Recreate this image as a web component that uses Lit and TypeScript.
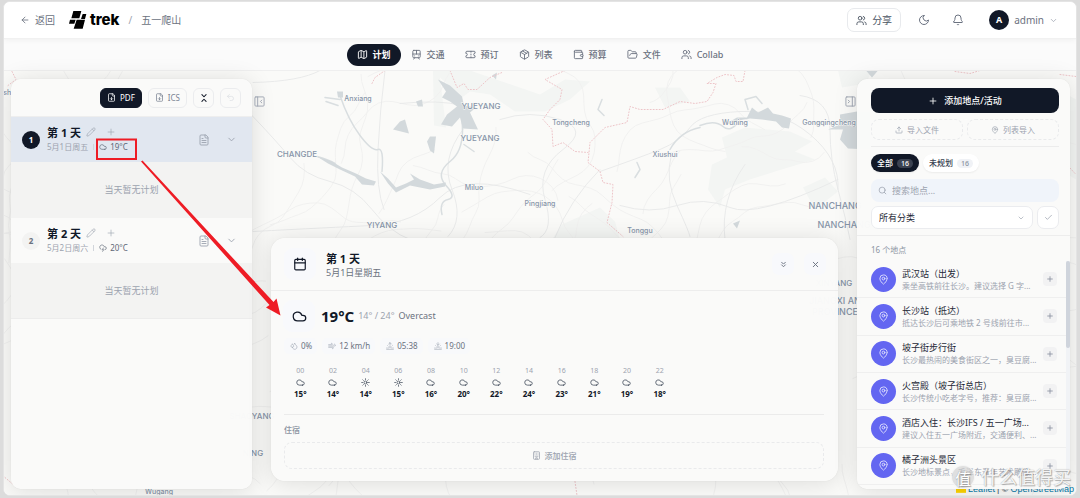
import { LitElement, html, css, svg } from "lit";
import { customElement } from "lit/decorators.js";
import { classMap } from "lit/directives/class-map.js";

const ICONS: Record<string, unknown> = {
  back: svg`<path d="m12 19-7-7 7-7"/><path d="M19 12H5"/>`,
  map: svg`<path d="M14.106 5.553a2 2 0 0 0 1.788 0l3.659-1.83A1 1 0 0 1 21 4.619v12.764a1 1 0 0 1-.553.894l-4.553 2.277a2 2 0 0 1-1.788 0l-4.212-2.106a2 2 0 0 0-1.788 0l-3.659 1.83A1 1 0 0 1 3 19.381V6.618a1 1 0 0 1 .553-.894l4.553-2.277a2 2 0 0 1 1.788 0z"/><path d="M15 5.764v15"/><path d="M9 3.236v15"/>`,
  train: svg`<rect width="16" height="16" x="4" y="3" rx="2"/><path d="M4 11h16"/><path d="M12 3v8"/><path d="m8 19-2 3"/><path d="m18 22-2-3"/><path d="M8 15h.01"/><path d="M16 15h.01"/>`,
  ticket: svg`<path d="M2 9a3 3 0 0 1 0 6v2a2 2 0 0 0 2 2h16a2 2 0 0 0 2-2v-2a3 3 0 0 1 0-6V7a2 2 0 0 0-2-2H4a2 2 0 0 0-2 2Z"/><path d="M13 5v2"/><path d="M13 17v2"/><path d="M13 11v2"/>`,
  box: svg`<path d="M11 21.73a2 2 0 0 0 2 0l7-4A2 2 0 0 0 21 16V8a2 2 0 0 0-1-1.73l-7-4a2 2 0 0 0-2 0l-7 4A2 2 0 0 0 3 8v8a2 2 0 0 0 1 1.73z"/><path d="M12 22V12"/><path d="m3.3 7 8.7 5 8.7-5"/><path d="m7.5 4.27 9 5.15"/>`,
  wallet: svg`<path d="M19 7V4a1 1 0 0 0-1-1H5a2 2 0 0 0 0 4h15a1 1 0 0 1 1 1v4h-3a2 2 0 0 0 0 4h3a1 1 0 0 0 1-1v-2a1 1 0 0 0-1-1"/><path d="M3 5v14a2 2 0 0 0 2 2h15a1 1 0 0 0 1-1v-4"/>`,
  folder: svg`<path d="m6 14 1.5-2.9A2 2 0 0 1 9.24 10H20a2 2 0 0 1 1.94 2.5l-1.54 6a2 2 0 0 1-1.95 1.5H4a2 2 0 0 1-2-2V5a2 2 0 0 1 2-2h3.9a2 2 0 0 1 1.69.9l.81 1.2a2 2 0 0 0 1.67.9H18a2 2 0 0 1 2 2v2"/>`,
  users: svg`<path d="M16 21v-2a4 4 0 0 0-4-4H6a4 4 0 0 0-4 4v2"/><circle cx="9" cy="7" r="4"/><path d="M22 21v-2a4 4 0 0 0-3-3.87"/><path d="M16 3.13a4 4 0 0 1 0 7.75"/>`,
  moon: svg`<path d="M12 3a6 6 0 0 0 9 9 9 9 0 1 1-9-9Z"/>`,
  bell: svg`<path d="M10.268 21a2 2 0 0 0 3.464 0"/><path d="M3.262 15.326A1 1 0 0 0 4 17h16a1 1 0 0 0 .74-1.673C19.41 13.956 18 12.499 18 8A6 6 0 0 0 6 8c0 4.499-1.411 5.956-2.738 7.326"/>`,
  down: svg`<path d="m6 9 6 6 6-6"/>`,
  filedown: svg`<path d="M15 2H6a2 2 0 0 0-2 2v16a2 2 0 0 0 2 2h12a2 2 0 0 0 2-2V7Z"/><path d="M14 2v4a2 2 0 0 0 2 2h4"/><path d="M12 18v-6"/><path d="m9 15 3 3 3-3"/>`,
  collapse: svg`<path d="m7 20 5-5 5 5"/><path d="m7 4 5 5 5-5"/>`,
  undo: svg`<path d="M9 14 4 9l5-5"/><path d="M4 9h10.500a5.500 5.500 0 0 1 0 11H11"/>`,
  pencil: svg`<path d="M21.174 6.812a1 1 0 0 0-3.986-3.987L3.842 16.174a2 2 0 0 0-.5.83l-1.321 4.352a.5.5 0 0 0 .623.622l4.353-1.32a2 2 0 0 0 .83-.497z"/><path d="m15 5 4 4"/>`,
  plus: svg`<path d="M5 12h14"/><path d="M12 5v14"/>`,
  note: svg`<path d="M15 2H6a2 2 0 0 0-2 2v16a2 2 0 0 0 2 2h12a2 2 0 0 0 2-2V7Z"/><path d="M14 2v4a2 2 0 0 0 2 2h4"/><path d="M10 9H8"/><path d="M16 13H8"/><path d="M16 17H8"/>`,
  cloud: svg`<path d="M17.500 19H9a7 7 0 1 1 6.710-9h1.790a4.500 4.500 0 1 1 0 9Z"/>`,
  storm: svg`<path d="M6 16.326A7 7 0 1 1 15.710 8h1.790a4.500 4.500 0 0 1 .5 8.973"/><path d="m13 12-3 5h4l-3 5"/>`,
  sun: svg`<circle cx="12" cy="12" r="4"/><path d="M12 2v2"/><path d="M12 20v2"/><path d="m4.930 4.930 1.410 1.410"/><path d="m17.660 17.660 1.410 1.410"/><path d="M2 12h2"/><path d="M20 12h2"/><path d="m6.340 17.660-1.410 1.410"/><path d="m19.070 4.930-1.410 1.410"/>`,
  calendar: svg`<path d="M8 2v4"/><path d="M16 2v4"/><rect width="18" height="18" x="3" y="4" rx="2"/><path d="M3 10h18"/>`,
  chevrons: svg`<path d="m7 6 5 5 5-5"/><path d="m7 13 5 5 5-5"/>`,
  close: svg`<path d="M18 6 6 18"/><path d="m6 6 12 12"/>`,
  drops: svg`<path d="M7 16.300c2.200 0 4-1.830 4-4.050 0-1.160-.57-2.260-1.710-3.190S7.290 6.750 7 5.300c-.29 1.450-1.140 2.840-2.290 3.760S3 11.100 3 12.250c0 2.220 1.800 4.050 4 4.050z"/><path d="M12.560 6.600A10.970 10.970 0 0 0 14 3.020c.5 2.500 2 4.900 4 6.500s3 3.500 3 5.500a6.980 6.980 0 0 1-11.910 4.970"/>`,
  wind: svg`<path d="M12.800 19.600A2 2 0 1 0 14 16H2"/><path d="M17.500 8a2.500 2.500 0 1 1 2 4H2"/><path d="M9.800 4.400A2 2 0 1 1 11 8H2"/>`,
  sunrise: svg`<path d="M12 2v8"/><path d="m4.930 10.930 1.410 1.410"/><path d="M2 18h2"/><path d="M20 18h2"/><path d="m19.070 10.930-1.410 1.410"/><path d="M22 22H2"/><path d="m8 6 4-4 4 4"/><path d="M16 18a4 4 0 0 0-8 0"/>`,
  sunset: svg`<path d="M12 10V2"/><path d="m4.930 10.930 1.410 1.410"/><path d="M2 18h2"/><path d="M20 18h2"/><path d="m19.070 10.930-1.410 1.410"/><path d="M22 22H2"/><path d="m16 6-4 4-4-4"/><path d="M16 18a4 4 0 0 0-8 0"/>`,
  hotel: svg`<rect width="16" height="20" x="4" y="2" rx="2"/><path d="M8 6h.01M12 6h.01M16 6h.01M8 10h.01M12 10h.01M16 10h.01M8 14h8"/><path d="M10 22v-4h4v4"/>`,
  upload: svg`<path d="M12 3v12"/><path d="m17 8-5-5-5 5"/><path d="M21 15v4a2 2 0 0 1-2 2H5a2 2 0 0 1-2-2v-4"/>`,
  pin: svg`<path d="M20 10c0 4.993-5.539 10.193-7.399 11.799a1 1 0 0 1-1.202 0C9.539 20.193 4 14.993 4 10a8 8 0 0 1 16 0"/><circle cx="12" cy="10" r="3"/>`,
  search: svg`<circle cx="11" cy="11" r="8"/><path d="m21 21-4.300-4.300"/>`,
  check: svg`<path d="M20 6 9 17l-5-5"/>`,
  panelLeft: svg`<rect width="20" height="20" x="2" y="2" rx="2"/><path d="M8 2v20"/><path d="m17 9-3 3 3 3"/>`,
  panelRight: svg`<rect width="20" height="20" x="2" y="2" rx="2"/><path d="M16 2v20"/><path d="m7 9 3 3-3 3"/>`,
};

const icon = (name: string, size = 10, width = 2) => html`<svg
  class="icon" width=${size} height=${size} viewBox="0 0 24 24" fill="none" stroke="currentColor"
  stroke-width=${width} stroke-linecap="round" stroke-linejoin="round" aria-hidden="true">${ICONS[name]}</svg>`;

const TABS = [
  ["map", "计划"], ["train", "交通"], ["ticket", "预订"], ["box", "列表"],
  ["wallet", "预算"], ["folder", "文件"], ["users", "Collab"],
];

const DAYS = [
  { n: 1, date: "5月1日周五", sky: "cloud", temp: "19°C" },
  { n: 2, date: "5月2日周六", sky: "storm", temp: "20°C" },
];

const HOURS: [string, string, string][] = [
  ["00", "cloud", "15°"], ["02", "cloud", "14°"], ["04", "sun", "14°"], ["06", "sun", "15°"],
  ["08", "cloud", "16°"], ["10", "cloud", "20°"], ["12", "cloud", "22°"], ["14", "cloud", "24°"],
  ["16", "cloud", "23°"], ["18", "cloud", "21°"], ["20", "cloud", "19°"], ["22", "cloud", "18°"],
];

const PLACES = [
  ["武汉站（出发）", "乘坐高铁前往长沙。建议选择 G 字..."],
  ["长沙站（抵达）", "抵达长沙后可乘地铁 2 号线前往市..."],
  ["坡子街步行街", "长沙最热闹的美食街区之一，臭豆腐..."],
  ["火宫殿（坡子街总店）", "长沙传统小吃老字号，推荐：臭豆腐..."],
  ["酒店入住：长沙IFS / 五一广场...", "建议入住五一广场附近，交通便利、..."],
  ["橘子洲头景区", "长沙地标景点，毛泽东青年艺术雕像..."],
];

const CITIES: [number, number, string, number][] = [
  [358, 101, "Anxiang", 7], [481, 109, "YUEYANG", 8], [480, 141, "YUEYANG", 8],
  [571, 125, "Tongcheng", 7], [297, 157, "CHANGDE", 8], [665, 157, "Xiushui", 7],
  [735, 125, "Wuning", 7], [829, 125, "Gongqingcheng", 7], [474, 190, "Miluo", 7],
  [540, 206, "Pingjiang", 7], [382, 228, "YIYANG", 8], [640, 233, "Tonggu", 7],
  [835, 209, "NANCHANG", 9], [844, 228, "NANCHANG", 9], [1, 95, "Jingshi", 7],
  [253, 456, "NING", 8], [252, 419, "SHAOYANG", 8], [834, 286, "XINYANG", 8],
  [835, 304, "JIANGXI AN", 9], [835, 315, "PROVINCE", 9], [159, 494, "Wugang", 7],
];

/* Secondary roads: a fixed pseudo-random walk, so that the mesh is the same on every load. */
function roadMesh(count: number): string {
  let seed = 41;
  const rnd = () => (seed = (seed * 16807) % 2147483647) / 2147483647;
  let d = "";
  for (let i = 0; i < count; i++) {
    let x = rnd() * 1080, y = 65 + rnd() * 430, a = rnd() * 6.28;
    d += `M${x.toFixed(0)} ${y.toFixed(0)}`;
    const steps = 5 + Math.floor(rnd() * 9);
    for (let s = 0; s < steps; s++) {
      const mx = x + Math.cos(a) * 7, my = y + Math.sin(a) * 7;
      a += (rnd() - 0.5) * 1.3;
      x = mx + Math.cos(a) * 8;
      y = my + Math.sin(a) * 8;
      d += `Q${mx.toFixed(1)} ${my.toFixed(1)} ${x.toFixed(1)} ${y.toFixed(1)}`;
    }
  }
  return d;
}

@customElement("trek-map")
export class TrekMap extends LitElement {
  static styles = css`
    :host { display: block; overflow: hidden; background: #fafaf8; }
    .canvas { display: block; width: 100%; height: 100%; }
    .label { font-family: Inter, "Noto Sans", sans-serif; font-weight: 500; fill: #8795a8;
      stroke: #fafaf8; stroke-width: 1px; paint-order: stroke; text-anchor: middle; }
    .land { fill: #f3f5f3; }
    .water { fill: #d3d9dc; }
    .line { fill: none; stroke-linejoin: round; stroke-linecap: round; }
    .road { stroke: #f1f1f0; stroke-width: 1; }
    .main { stroke: #e9eaea; stroke-width: 1; }
    .river { stroke: #d9dee0; stroke-width: 1.500; }
    .border { stroke: #edc4c8; stroke-width: 1; stroke-dasharray: 1 2; }
  `;
  render() {
    return html`<svg class="canvas" viewBox="4 71 1072 425" preserveAspectRatio="xMidYMid slice" role="img" aria-label="地图">
      <path class="land" d="M433 71L470 71 540 95 565 80 590 82 570 100 545 112 515 112 490 95 470 92 462 98 440 78 446 128 434 126ZM722 138L745 128 790 132 812 142 795 152 815 160 775 172 750 180 725 190 720 208 708 190 712 165 727 158ZM655 88L680 88 690 102 665 108ZM562 225L600 208 615 222 620 240 552 240ZM838 71L872 71 866 84 842 88ZM803 188L825 178 838 192 815 210ZM1040 80L1076 100 1076 180 1060 170Z"/>
      <path class="line road" d=${roadMesh(105)}/>
      <path class="line main" d="M252 116Q275 140 290 158T330 182T372 210T410 240M385 71Q380 110 378 150T384 210M463 130Q440 160 452 190T448 237M500 120Q530 110 560 120T563 150T545 200T540 238M600 172Q640 158 660 150T690 128T740 112T810 135T838 190M671 157Q665 180 677 206T690 237M600 170Q570 200 555 238M620 206Q650 215 677 206T730 208T838 180M253 232Q330 228 372 226T440 198T530 195M800 96Q830 100 830 130T838 190T850 240M725 240Q720 200 745 165M253 83Q300 82 320 71M400 104Q440 100 462 106"/>
      <path class="line river" d="M340 96Q348 120 360 136T378 150T382 172M462 122Q465 150 450 162T446 186T448 200T442 215M700 126Q715 120 723 127T740 120M317 157Q328 160 335 164M670 150Q680 132 700 128M748 110L745 100 756 97 762 104M340 100L325 98M338 106L326 102M637 163L640 170 635 178M602 100L598 110 604 116M464 145L474 152"/>
      <path class="water" d="M438 80L450 86 462 97 464 106 476 108 470 113 478 130 463 129 460 118 452 127 441 125 447 115 457 107 450 102 442 98 446 92ZM393 130L400 122 405 120 409 134ZM430 137L436 137 434 154 430 151 427 142ZM317 157L332 162 342 168 356 174 366 179 376 182 374 186 362 185 355 177 340 170 328 164ZM380 172L388 179 396 188 406 184 414 180 410 174 420 180 434 185 446 183 445 187 430 190 410 186 396 193 388 184ZM416 102L422 100 423 107 418 107ZM337 92L343 92 343 98 338 98ZM723 126L737 118 747 118 752 108 758 113 768 108 773 114 782 116 791 119 789 129 782 128 776 122 762 120 750 119 738 121ZM840 115L857 112 870 112 870 150 848 149 840 140 843 130 828 130 840 125ZM866 71L878 71 872 78ZM733 224L740 221 737 229ZM492 76L497 73 496 80Z"/>
      <path class="line border" d="M745 71L743 82 736 82 734 76 725 75 717 78 707 84 716 84 713 93 707 102 695 104 680 102 663 110 640 110 630 107 627 123 605 128 590 143 588 163 600 172 603 183 613 185 612 203 607 223 623 237M565 71L545 80 562 90 560 100 550 110 543 120 552 130 553 147 563 143 575 152 588 153M450 71L457 88 464 84 468 90 477 90 490 78 502 73M385 71L375 78 372 84M955 72L970 74 980 71M1060 75L1076 77M1062 160L1076 175M5 478L12 484 22 486M12 72L16 80 8 86M575 482L577 496"/>
      ${CITIES.map(([x, y, name, size]) => svg`<text class="label" x=${x} y=${y} font-size=${size}>${name}</text>`)}
    </svg>`;
  }
}

@customElement("app-root")
export class AppRoot extends LitElement {
  static styles = css`
    :host { display: block; min-height: 100vh; box-sizing: border-box; padding: 1px 3px 2px 3px; background: #dcdcdc;
      font-family: "Noto Sans", "Noto Sans CJK SC", sans-serif; font-size: 9px; line-height: 12px; color: #111827; }
    * { box-sizing: border-box; }
    .icon { display: block; flex: none; }
    button, input, select { font: inherit; color: inherit; margin: 0; padding: 0; border: 0; background: none; }
    button { display: inline-flex; align-items: center; justify-content: center; cursor: pointer; }
    a { color: inherit; text-decoration: none; }
    h1, h2, h3, p, ul { margin: 0; padding: 0; font-size: inherit; font-weight: inherit; list-style: none; }

    .window { position: relative; display: flex; flex-direction: column; min-height: calc(100vh - 3px);
      border: 1px solid #e4e4e4; border-radius: 7px; overflow: hidden; background: #fff; }
    .top { display: flex; align-items: center; height: 37px; padding: 0 18px 0 16px; font-size: 10px; color: #6b7280;
      border-bottom: 1px solid #f1f1f1; box-shadow: 0 1px 6px rgba(0, 0, 0, .05); background: #fff; z-index: 1; }
    .back { display: flex; align-items: center; gap: 5px; margin-right: 14px; }
    .brand { display: flex; align-items: center; gap: 3px; color: #000; font: 800 15px/18px Inter, sans-serif; }
    .slash { margin: 0 9px; color: #9ca3af; }
    .account { display: flex; align-items: center; margin-left: auto; }
    .share { height: 24px; width: 54px; gap: 5px; border: 1px solid #e8eaed; border-radius: 7px; color: #4b5563; }
    .round { width: 24px; height: 24px; }
    .share + .round { margin-left: 11px; }
    .round + .round { margin-left: 10px; }
    .user { gap: 5px; margin-left: 19px; }
    .avatar { display: grid; place-items: center; width: 20px; height: 20px; border-radius: 50%; background: #111827;
      color: #fff; font-size: 9px; font-weight: 700; }
    .user .icon { color: #9ca3af; }

    .tabs { display: flex; justify-content: center; align-items: center; height: 32px; background: #fbfbfb;
      border-bottom: 1px solid #efefef; color: #6b7280; font-weight: 500; }
    .tab { display: flex; align-items: center; gap: 5px; height: 22px; padding: 0 10px; border-radius: 11px; }
    .tab.on { background: #111827; color: #fff; font-weight: 700; }

    .stage { position: relative; flex: 1; display: grid; grid-template-columns: 241px auto minmax(0, 1fr) auto 213px;
      padding: 8px 6px 6px 7px; }
    .backdrop { position: absolute; inset: 0; }
    .panel, .card { position: relative; background: rgba(250, 250, 249, .98);
      box-shadow: 0 0 1px rgba(0, 0, 0, .15), 0 2px 24px rgba(0, 0, 0, .12); overflow: hidden; }
    .panel { display: flex; flex-direction: column; border-radius: 10px; }
    .toggle { position: relative; width: 14px; height: 20px; margin-top: 12px; color: #9ca3af; align-self: start; }

    .tools { display: flex; justify-content: flex-end; align-items: center; gap: 6px; height: 38px; padding: 0 11px;
      border-bottom: 1px solid #eeeeee; color: #7b8494; font-size: 8px; }
    .tool { height: 20px; min-width: 21px; gap: 4px; border: 1px solid #ebecee; border-radius: 6px; }
    .tool.wide { padding: 0 6px; }
    .tool.dark { background: #111827; border-color: #111827; color: #fff; }
    .tool.strong { color: #111827; }
    .tool.off { color: #dde0e4; }
    .day { display: flex; align-items: center; height: 45px; padding: 0 15px 0 11px; color: #9ca3af; }
    .day.on { background: #e1e7f0; }
    .num { display: grid; place-items: center; width: 18px; height: 18px; margin-right: 7px; border-radius: 50%;
      background: #f3f3f2; color: #6b7280; font-size: 8px; font-weight: 700; }
    .day.on .num { background: #111827; color: #fff; }
    .info { flex: 1; }
    .line { display: flex; align-items: center; gap: 5px; height: 15px; }
    .line button + button { margin-left: 5px; }
    .title { font-size: 11px; font-weight: 700; color: #111827; line-height: 15px; }
    .line.small { font-size: 8px; gap: 6px; }
    .sep { width: 1px; height: 6px; background: #d1d5db; margin: 0 -1px; }
    .sky { display: flex; align-items: center; gap: 3px; color: #5f6877; }
    .side { display: flex; gap: 16px; align-items: center; }
    .empty { display: grid; place-items: center; height: 56px; background: #f3f3f2; color: #9ca3af; }
    .empty.last { border-bottom: 1px solid #ececec; }

    .card { align-self: end; min-width: 0; margin: 0 5px 8px 5px; border-radius: 14px; }
    .head { display: flex; align-items: center; height: 53px; padding: 0 12px 0 13px; border-bottom: 1px solid #ededed; }
    .tile { display: grid; place-items: center; width: 32px; height: 32px; border-radius: 9px; background: #f8f9fc; }
    .heading { flex: 1; margin-left: 10px; padding-top: 2px; line-height: 14px; color: #6b7280; }
    .actions { display: flex; gap: 10px; color: #6b7280; }
    .actions button { width: 22px; height: 22px; border-radius: 7px; background: #f8f9fc; }
    .detail { padding: 9px 14px 12px 13px; }
    .now { display: flex; align-items: center; height: 32px; }
    .now .tile { margin: 0 6px 0 -1px; }
    .temp { font-size: 15px; font-weight: 700; line-height: 20px; margin-right: 4px; }
    .range { color: #9ca3af; }
    .desc { color: #6b7280; margin-left: 4px; }
    .chips { display: flex; gap: 5px; margin-top: 6px; font-size: 8px; color: #6b7280; }
    .chip { display: flex; align-items: center; gap: 3px; height: 16px; padding: 0 5px 0 6px; border-radius: 5px; background: #f8f9fb; }
    .chip .icon { color: #a3aab6; }
    .hours { display: grid; grid-template-columns: repeat(12, minmax(0, 1fr)); max-width: 392px; margin-top: 12px; text-align: center; }
    .hour { display: grid; justify-items: center; grid-template-rows: 10px 12px 12px; align-items: center;
      font-size: 7px; color: #9ca3af; }
    .hour .icon { color: #374151; }
    .hour strong { font-size: 8px; color: #111827; }
    .stay { margin-top: 14px; padding-top: 9px; border-top: 1px solid #ebebeb; font-size: 8px; font-weight: 500; color: #8a92a0; }
    .dashed { border: 1px dashed #e9eaec; border-radius: 8px; color: #9ca3af; gap: 4px; font-size: 8px; }
    .stay .dashed { width: 100%; height: 27px; margin-top: 6px; }

    .filters { padding: 9px 11px 6px 14px; border-bottom: 1px solid #ededed; display: grid; gap: 6px; }
    .add { height: 25px; gap: 6px; border-radius: 8px; background: #111827; color: #fff; font-weight: 500; }
    .pair { display: grid; grid-template-columns: 1fr 1fr; gap: 4px; padding-bottom: 6px; border-bottom: 1px solid #ececec; }
    .pair .dashed { height: 21px; }
    .pills { display: flex; gap: 4px; font-size: 8px; font-weight: 500; padding: 1px 0; }
    .pill { height: 18px; padding: 0 6px; gap: 4px; border-radius: 9px; background: #fff; color: #374151; box-shadow: 0 1px 2px rgba(0, 0, 0, .06); }
    .pill.on { background: #111827; color: #fff; }
    .badge { height: 9px; padding: 0 4px; border-radius: 5px; font-size: 7px; line-height: 9px; background: #f0f2f6; color: #8a92a0; }
    .pill.on .badge { background: #3b4251; color: #fff; }
    .search { display: flex; align-items: center; gap: 5px; height: 23px; padding: 0 7px; border-radius: 8px; background: #f0f4fa; color: #9ca3af; }
    .search input { flex: 1; min-width: 0; outline: 0; }
    .search input::placeholder { color: #9ca3af; opacity: 1; }
    .choose { display: flex; gap: 4px; margin-top: -2px; }
    .select { position: relative; flex: 1; display: flex; align-items: center; color: #9ca3af; }
    .select select { appearance: none; width: 100%; height: 23px; padding: 0 7px; border: 1px solid #ebecef; border-radius: 7px; background: #fff; color: #1f2937; }
    .select .icon { position: absolute; right: 8px; pointer-events: none; }
    .tick { width: 22px; height: 23px; border: 1px solid #ebecef; border-radius: 7px; background: #fff; color: #9ca3af; }
    .count { padding: 8px 14px 5px 14px; font-size: 8px; color: #8d95a3; }
    .scroller { flex: 1; display: flex; padding-bottom: 4px; }
    .places { flex: 1; min-width: 0; display: grid; grid-auto-rows: minmax(37px, 1fr); }
    .place { display: flex; align-items: center; padding: 0 9px 0 14px; border-bottom: 1px solid #efefef; }
    .dot { display: grid; place-items: center; width: 25px; height: 25px; flex: none; border-radius: 50%; background: #6366f1; color: #dfe0fd; }
    .words { flex: 1; min-width: 0; margin: 0 6px 0 6px; white-space: nowrap; overflow: hidden; }
    .words h3 { color: #1f2937; }
    .words p { font-size: 8px; line-height: 11px; color: #9ca3af; }
    .plus { width: 14px; height: 14px; flex: none; border-radius: 4px; background: #f2f2f3; color: #8a92a0; }
    .bar { width: 4px; background: #f1f3f6; }
    .thumb { height: 87px; border-radius: 2px; background: #cfd4dc; }

    .credit { position: absolute; right: 2px; bottom: 0; display: flex; align-items: center; gap: 2px; line-height: 12px; color: #4b5563; font-family: "Liberation Sans", sans-serif; }
    .credit a { color: #0078a8; }
    .marks { position: absolute; left: 0; top: 0; width: 300px; height: 340px; pointer-events: none; }
    .stamp { position: absolute; right: 5px; bottom: 5px; display: flex; align-items: center; gap: 6px; pointer-events: none;
      font-size: 18px; line-height: 26px; color: rgba(255, 255, 255, .9); text-shadow: 0 0 1px #999, 1px 1px 1px rgba(0, 0, 0, .3); }
    .seal { display: grid; place-items: center; width: 24px; height: 24px; border-radius: 50%; background: rgba(205, 205, 205, .6);
      border: 1px solid rgba(255, 255, 255, .7); color: #fff; font-size: 16px; }
  `;

  private dayRow(day: (typeof DAYS)[number]) {
    const on = day.n === 1;
    return html`
      <section>
        <div class=${classMap({ day: true, on })}>
          <span class="num">${day.n}</span>
          <div class="info">
            <div class="line">
              <h2 class="title">第 ${day.n} 天</h2>
              <button aria-label="编辑">${icon("pencil", 10, 1.500)}</button>
              <button aria-label="添加">${icon("plus", 10, 1.500)}</button>
            </div>
            <div class="line small">
              <span>${day.date}</span><span class="sep"></span>
              <span class="sky">${icon(day.sky, 8)}${day.temp}</span>
            </div>
          </div>
          <div class="side">
            <button aria-label="备注">${icon("note", 12, 1.800)}</button>
            <button aria-label="折叠">${icon("down", 11, 2)}</button>
          </div>
        </div>
        <p class=${classMap({ empty: true, last: !on })}>当天暂无计划</p>
      </section>`;
  }

  render() {
    return html`
      <div class="window">
        <header class="top">
          <a class="back" href="#">${icon("back", 10)}返回</a>
          <a class="brand" href="#">
            <svg class="icon" width="18" height="18" viewBox="0 0 54 54" aria-hidden="true">
              <path d="M13 0H37L31 22H7Q11 8 13 0ZM41 9H52L48 24H36ZM3 26H20L16 38H0ZM23 26H48L41 53H14Z"/>
            </svg>trek</a>
          <span class="slash">/</span><h1>五一爬山</h1>
          <div class="account">
            <button class="share">${icon("users", 11)}分享</button>
            <button class="round" aria-label="深色模式">${icon("moon", 12)}</button>
            <button class="round" aria-label="通知">${icon("bell", 12)}</button>
            <button class="user"><span class="avatar">A</span>admin${icon("down", 9)}</button>
          </div>
        </header>
        <nav class="tabs">
          ${TABS.map(([name, label], i) => html`<a href="#" class=${classMap({ tab: true, on: i === 0 })}>${icon(name, 11)}${label}</a>`)}
        </nav>
        <main class="stage">
          <trek-map class="backdrop"></trek-map>
          <div class="credit">
            <svg class="icon" width="10" height="7" viewBox="0 0 12 8" aria-hidden="true"><path fill="#4C7BE1" d="M0 0h12v4H0z"/><path fill="#FFD500" d="M0 3h12v5H0z"/></svg>
            <a href="#">Leaflet</a> | © <a href="#">OpenStreetMap</a>
          </div>
          <aside class="panel">
            <div class="tools">
              <button class="tool wide dark">${icon("filedown", 9)}PDF</button>
              <button class="tool wide">${icon("filedown", 9)}ICS</button>
              <button class="tool strong" aria-label="全部折叠">${icon("collapse", 10, 2.500)}</button>
              <button class="tool off" aria-label="撤销">${icon("undo", 9)}</button>
            </div>
            ${DAYS.map((d) => this.dayRow(d))}
          </aside>
          <button class="toggle" aria-label="收起左侧">${icon("panelLeft", 11)}</button>
          <article class="card">
            <header class="head">
              <span class="tile">${icon("calendar", 14)}</span>
              <div class="heading"><h2 class="title">第 1 天</h2><p>5月1日星期五</p></div>
              <div class="actions">
                <button aria-label="收起">${icon("chevrons", 9, 2.500)}</button>
                <button aria-label="关闭">${icon("close", 9, 2.500)}</button>
              </div>
            </header>
            <div class="detail">
              <div class="now">
                <span class="tile">${icon("cloud", 15)}</span>
                <span class="temp">19°C</span><span class="range">14° / 24°</span><span class="desc">Overcast</span>
              </div>
              <div class="chips">
                <span class="chip">${icon("drops", 8)}0%</span>
                <span class="chip">${icon("wind", 8)}12 km/h</span>
                <span class="chip">${icon("sunrise", 8)}05:38</span>
                <span class="chip">${icon("sunset", 8)}19:00</span>
              </div>
              <div class="hours">
                ${HOURS.map(([h, sky, t]) => html`<div class="hour"><span>${h}</span>${icon(sky, 9)}<strong>${t}</strong></div>`)}
              </div>
              <div class="stay">
                <h3>住宿</h3>
                <button class="dashed">${icon("hotel", 9)}添加住宿</button>
              </div>
            </div>
          </article>
          <button class="toggle" aria-label="收起右侧">${icon("panelRight", 11)}</button>
          <aside class="panel">
            <div class="filters">
              <button class="add">${icon("plus", 10)}添加地点/活动</button>
              <div class="pair">
                <button class="dashed">${icon("upload", 8)}导入文件</button>
                <button class="dashed">${icon("pin", 8)}列表导入</button>
              </div>
              <div class="pills">
                <button class="pill on">全部<span class="badge">16</span></button>
                <button class="pill">未规划<span class="badge">16</span></button>
              </div>
              <label class="search">${icon("search", 9)}<input type="text" placeholder="搜索地点..." aria-label="搜索地点" /></label>
              <div class="choose">
                <label class="select"><select aria-label="分类"><option>所有分类</option></select>${icon("down", 8)}</label>
                <button class="tick" aria-label="选择">${icon("check", 9)}</button>
              </div>
            </div>
            <p class="count">16 个地点</p>
            <div class="scroller">
              <ul class="places">
                ${PLACES.map(([name, text]) => html`<li class="place">
                  <span class="dot">${icon("pin", 11)}</span>
                  <div class="words"><h3>${name}</h3><p>${text}</p></div>
                  <button class="plus" aria-label="添加">${icon("plus", 8, 2.500)}</button>
                </li>`)}
              </ul>
              <div class="bar"><div class="thumb"></div></div>
            </div>
          </aside>
        </main>
        <svg class="marks" viewBox="4 2 300 340" aria-hidden="true">
          <rect x="97" y="139.500" width="39" height="19.500" fill="none" stroke="#ee1c25" stroke-width="2"/>
          <path fill="#ee1c25" d="M141 161.500L142.500 160.500 273.500 302 276.500 298.500 280.500 315.500 266 307.500 269.500 305Z"/>
        </svg>
        <div class="stamp"><span class="seal">值</span>什么值得买</div>
      </div>`;
  }
}
